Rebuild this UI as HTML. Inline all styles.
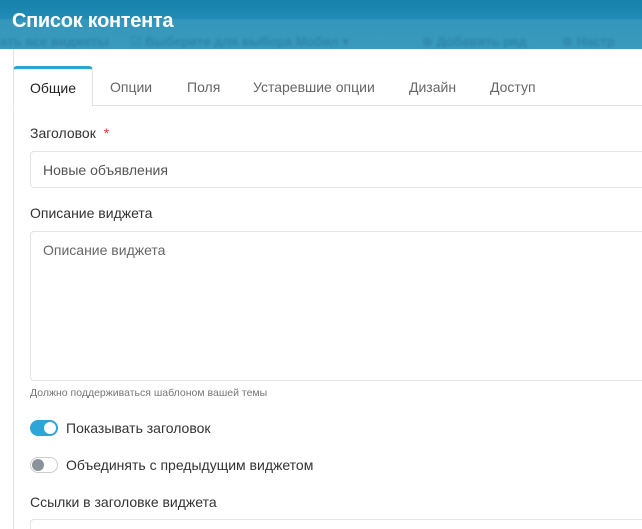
<!DOCTYPE html>
<html><head><meta charset="utf-8"><style>
*{box-sizing:border-box;margin:0;padding:0}
html,body{width:642px;height:529px;overflow:hidden}
body{background:#fff;font-family:"Liberation Sans","DejaVu Sans",sans-serif;position:relative;color:#333}
.hdr{position:absolute;left:0;top:0;width:642px;height:49px;background:linear-gradient(#1782ad 0,#1f8ab3 18px,#3596bb 20px,#3a9abe 49px);overflow:hidden}
.hdr h1{position:absolute;left:12px;top:10px;color:#fff;font-size:20px;font-weight:bold;letter-spacing:-0.3px}
.ghost{position:absolute;top:34px;font-size:13px;font-weight:bold;color:#2d84ab;white-space:nowrap;filter:blur(1.2px)}
.panel{position:absolute;left:13px;top:49px;width:629px;height:480px;border-left:1px solid #dfe3e6}
.tabs{position:absolute;left:13px;top:66px;width:629px;height:40px;border-bottom:1px solid #dfe3e6}
.tab{position:absolute;top:0;height:40px;line-height:42px;font-size:14px;color:#666}
.tab.act{left:0;width:80px;border:1px solid #dfe3e6;border-top:3px solid #2fa4d4;border-bottom:1px solid #fff;border-radius:4px 4px 0 0;background:#fff;color:#222;text-align:center;line-height:38px;height:41px}
.lbl{position:absolute;left:30px;font-size:14px;color:#333}
.inp{position:absolute;left:30px;width:620px;border:1px solid #e2e5e8;border-radius:4px;font-size:14px;color:#555;padding:0 12px}
.tg{position:absolute;left:30px;width:28px;height:16px;border-radius:8px}
.tg i{position:absolute;top:2px;width:12px;height:12px;border-radius:50%}
</style></head><body>
<div class="hdr">
<span class="ghost" style="left:0">ать все виджеты</span>
<span class="ghost" style="left:130px">☑ Выберите для выбора Мобил ▾</span>
<span class="ghost" style="left:422px">⊕ Добавить ряд</span>
<span class="ghost" style="left:562px">⊕ Настр</span>
<h1>Список контента</h1></div>
<div class="panel"></div>
<div class="tabs">
<div class="tab act">Общие</div>
<div class="tab" style="left:97px">Опции</div>
<div class="tab" style="left:174px">Поля</div>
<div class="tab" style="left:240px">Устаревшие опции</div>
<div class="tab" style="left:396px">Дизайн</div>
<div class="tab" style="left:477px">Доступ</div>
</div>
<div class="lbl" style="top:125px">Заголовок <span style="color:#d33;margin-left:4px">*</span></div>
<div class="inp" style="top:151px;height:37px;line-height:36px">Новые объявления</div>
<div class="lbl" style="top:205px">Описание виджета</div>
<div class="inp" style="top:231px;height:150px;padding-top:10px;color:#666">Описание виджета</div>
<div class="lbl" style="top:387px;font-size:10.5px;color:#777">Должно поддерживаться шаблоном вашей темы</div>
<div class="tg" style="top:420px;background:#2ba6d6"><i style="left:14px;background:#fff"></i></div>
<div class="lbl" style="top:420px;left:66px">Показывать заголовок</div>
<div class="tg" style="top:457px;background:#fff;border:1px solid #ccc"><i style="left:1px;top:1px;background:#8a939b"></i></div>
<div class="lbl" style="top:457px;left:66px">Объединять с предыдущим виджетом</div>
<div class="lbl" style="top:494px">Ссылки в заголовке виджета</div>
<div class="inp" style="top:519px;height:10px;border-bottom:none;border-radius:4px 4px 0 0"></div>
</body></html>
